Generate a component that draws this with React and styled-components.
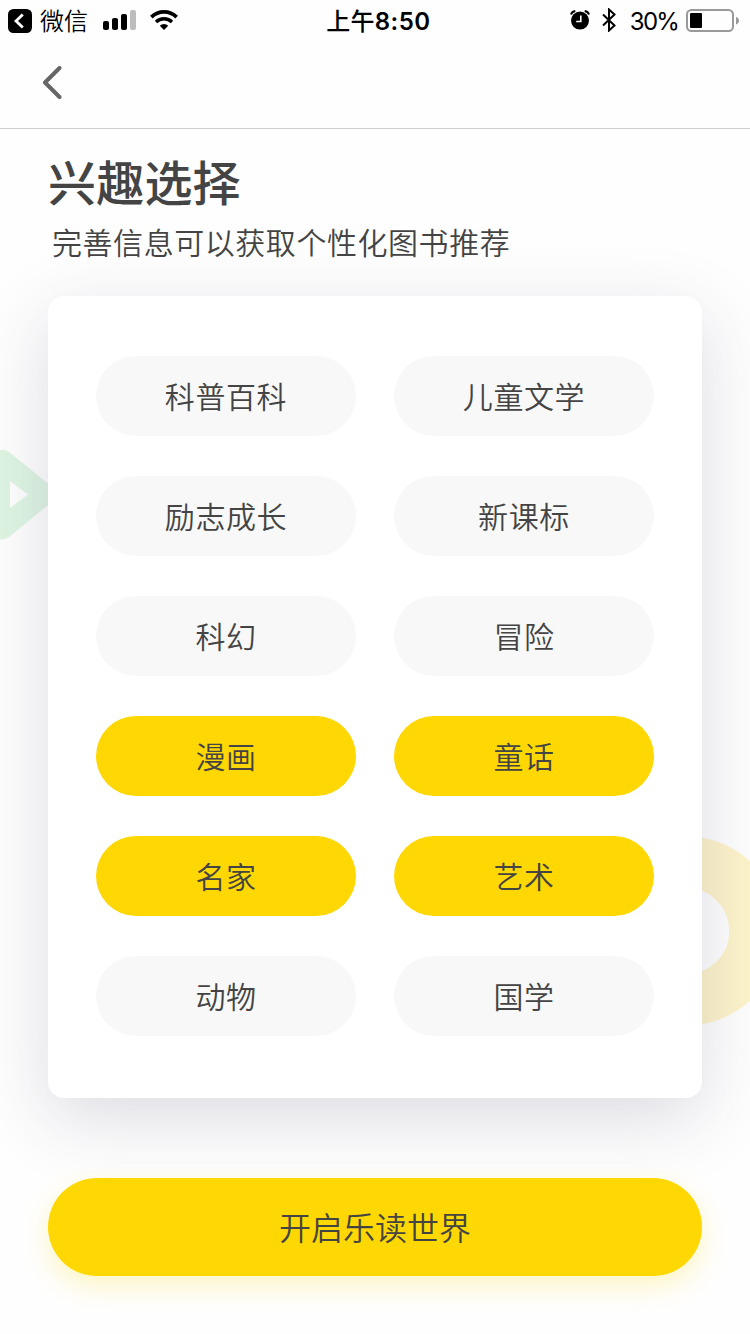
import React, { useState } from 'react';
import styled, { createGlobalStyle } from 'styled-components';

const colors = {
  text: '#444444',
  yellow: '#ffd803',
  chip: '#f8f8f8',
  page: '#fefefe',
};

const GlobalStyle = createGlobalStyle`
  * {
    box-sizing: border-box;
  }

  body {
    margin: 0;
    background: ${colors.page};
    font-family: "Inter", "Noto Sans CJK SC", sans-serif;
    color: ${colors.text};
  }

  button {
    border: 0;
    padding: 0;
    font-family: inherit;
    color: inherit;
    cursor: pointer;
  }
`;

const Screen = styled.div`
  position: relative;
  width: 750px;
  height: 1334px;
  overflow: hidden;
  isolation: isolate;
`;

const StatusBar = styled.div`
  height: 40px;
  display: grid;
  grid-template-columns: 1fr auto 1fr;
  align-items: center;
  padding: 0 11px 0 8px;
  color: #000;
  font-size: 24px;
  line-height: 37px;
`;

const StatusGroup = styled.div`
  display: flex;
  align-items: center;
  height: 40px;
  justify-content: ${props => (props.$end ? 'flex-end' : 'flex-start')};

  svg {
    display: block;
    flex: none;
  }
`;

const AppName = styled.span`
  margin: 0 15px 0 8px;
  padding-top: 3px;
  font-weight: 350;
`;

const Time = styled.span`
  padding: 3px 0 0 10px;
  font-size: 24px;
  font-weight: 500;
  letter-spacing: 0.2px;

  b {
    font-weight: 600;
    letter-spacing: 0.5px;
  }
`;

const Percent = styled.span`
  margin: 0 8px 0 14px;
  padding-top: 3px;
  letter-spacing: -1.8px;
`;

const NavBar = styled.header`
  height: 89px;
  display: flex;
  align-items: center;
  padding: 0 42px 3px;
  border-bottom: 1px solid #d0d0d0;
`;

const BackButton = styled.button`
  background: none;
  display: flex;
`;

const Main = styled.main`
  padding: 0 48px;
`;

const Title = styled.h1`
  margin: 0;
  padding-top: 20px;
  font-size: 48px;
  line-height: 70px;
  font-weight: 500;
  letter-spacing: 0.2px;
`;

const Subtitle = styled.p`
  margin: 2px 0 30px;
  padding-left: 4px;
  font-size: 30px;
  line-height: 45px;
  font-weight: 350;
  letter-spacing: 0.55px;
`;

const Card = styled.section`
  height: 802px;
  padding: 60px 48px;
  border-radius: 16px;
  background: #fff;
  box-shadow: 0 20px 70px rgba(55, 50, 90, 0.17);
`;

const ChipGrid = styled.div`
  display: grid;
  grid-template-columns: 260px 260px;
  justify-content: space-between;
  row-gap: 40px;
`;

const Chip = styled.button`
  height: 80px;
  padding-top: 2px;
  border-radius: 40px;
  background: ${props => (props.$active ? colors.yellow : colors.chip)};
  font-size: 30px;
  font-weight: 350;
  line-height: 78px;
  letter-spacing: 0.6px;
`;

const SubmitButton = styled.button`
  display: block;
  width: 100%;
  height: 98px;
  margin-top: 80px;
  padding-top: 3px;
  border-radius: 49px;
  background: ${colors.yellow};
  box-shadow: 0 10px 28px rgba(255, 216, 3, 0.24);
  font-size: 32px;
  font-weight: 350;
  line-height: 95px;
`;

const Decor = styled.svg`
  position: absolute;
  z-index: -1;
  top: ${props => props.$top}px;
  ${props => props.$side}: 0;
`;

const BackToApp = () => (
  <svg width="24" height="26" viewBox="0 0 24 26">
    <rect y="2" width="24" height="24" rx="5.5" fill="#000" />
    <path d="M14.8 7.5L8 14l6.8 6.5" fill="none" stroke="#fff" strokeWidth="2.8" />
  </svg>
);

const Signal = () => (
  <svg width="34" height="20" viewBox="0 0 34 20">
    <rect x="0" y="11" width="6" height="9" rx="2" />
    <rect x="9" y="8" width="6" height="12" rx="2" />
    <rect x="18" y="4" width="6" height="16" rx="2" />
    <rect x="27" y="0" width="6" height="20" rx="2" fill="#bdbdbd" />
  </svg>
);

const WifiIcon = styled.svg`
  margin-left: 13px;
`;

const Wifi = () => (
  <WifiIcon width="28" height="20" viewBox="0 0 28 20">
    <path d="M1.4 7.1a18 18 0 0 1 25.2 0" fill="none" stroke="#000" strokeWidth="3.8" />
    <path d="M6 12a11.5 11.5 0 0 1 16 0" fill="none" stroke="#000" strokeWidth="3.4" />
    <path d="M9.8 15.7a6 6 0 0 1 8.4 0L14 20z" />
  </WifiIcon>
);

const Alarm = () => (
  <svg width="20" height="20" viewBox="0 0 20 20">
    <circle cx="10" cy="10.6" r="9" />
    <path d="M1 4.5Q2 1.7 5.3 1.1M19 4.5Q18 1.7 14.7 1.1" fill="none" stroke="#000" strokeWidth="2" />
    <path d="M10.8 5.5v6H6.2" fill="none" stroke="#fff" strokeWidth="1.6" />
  </svg>
);

const BluetoothIcon = styled.svg`
  margin-left: 12px;
`;

const Bluetooth = () => (
  <BluetoothIcon width="14" height="24" viewBox="0 0 14 24">
    <path d="M1 6.5l11.5 11L7 22.5v-21l5.5 5L1 17.5" fill="none" stroke="#000" strokeWidth="2" />
  </BluetoothIcon>
);

const Battery = () => (
  <svg width="53" height="24" viewBox="0 0 53 24">
    <rect x="1" y="2" width="46" height="21" rx="4.5" fill="none" stroke="#999" strokeWidth="2" />
    <rect x="4" y="5" width="12" height="15" rx="1" />
    <path d="M50 9q3 1 3 3.7T50 16.4z" fill="#999" />
  </svg>
);

const genres = [
  '科普百科', '儿童文学',
  '励志成长', '新课标',
  '科幻', '冒险',
  '漫画', '童话',
  '名家', '艺术',
  '动物', '国学',
];

const App = () => {
  const [ selected, setSelected ] = useState(['漫画', '童话', '名家', '艺术']);

  const toggle = genre => {
    setSelected(selected.includes(genre)
      ? selected.filter(item => item !== genre)
      : [...selected, genre]);
  }

  return (
    <Screen>
      <GlobalStyle />
      <Decor $top={445} $side="left" width="60" height="100" viewBox="0 0 60 100">
        <path
          d="M0 5Q5 4 9 7L48 38.5Q60 49.5 48 60L9 92Q5 95 0 94ZM10 36V63L28 49.5Z"
          fill="#def5e3"
          fillRule="evenodd"
        />
      </Decor>
      <Decor $top={831} $side="right" width="160" height="200" viewBox="0 0 160 200">
        <circle cx="96" cy="100" r="69" fill="none" stroke="#fdf4cb" strokeWidth="51.5" />
      </Decor>

      <StatusBar>
        <StatusGroup>
          <BackToApp />
          <AppName>微信</AppName>
          <Signal />
          <Wifi />
        </StatusGroup>
        <Time>上午<b>8:50</b></Time>
        <StatusGroup $end>
          <Alarm />
          <Bluetooth />
          <Percent>30%</Percent>
          <Battery />
        </StatusGroup>
      </StatusBar>
      <NavBar>
        <BackButton aria-label="返回">
          <svg width="20" height="34" viewBox="0 0 20 34">
            <path
              d="M17.5 2L3 16.5 17.5 31"
              fill="none"
              stroke="#666"
              strokeWidth="4"
              strokeLinecap="round"
              strokeLinejoin="round"
            />
          </svg>
        </BackButton>
      </NavBar>

      <Main>
        <Title>兴趣选择</Title>
        <Subtitle>完善信息可以获取个性化图书推荐</Subtitle>
        <Card>
          <ChipGrid>
            {genres.map(genre => (
              <Chip
                key={genre}
                $active={selected.includes(genre)}
                onClick={() => toggle(genre)}
              >
                {genre}
              </Chip>
            ))}
          </ChipGrid>
        </Card>
        <SubmitButton>开启乐读世界</SubmitButton>
      </Main>
    </Screen>
  );
}

export default App;
